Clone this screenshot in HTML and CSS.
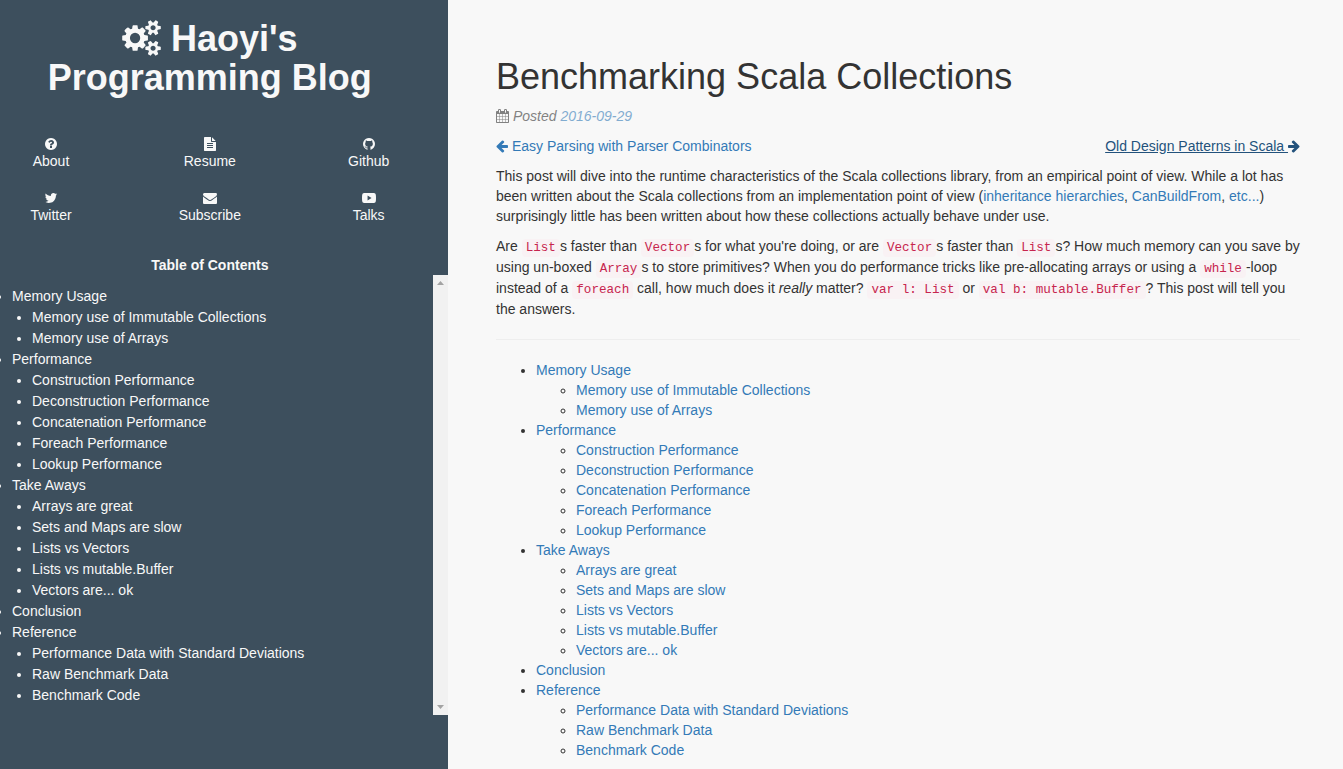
FILE: index.html
```html
<!DOCTYPE html>
<html lang="en">
<head>
<meta charset="utf-8">
<title>Benchmarking Scala Collections</title>
<link rel="stylesheet" href="styles.css">
</head>
<body>
<div class="page">
  <aside class="sidebar">
    <header class="brand">
      <h1 class="brand-title"><a href="#"><svg class="icon-cogs" viewBox="0 0 1920 1792" aria-hidden="true"><path d="M896 896q0-106-75-181t-181-75-181 75-75 181 75 181 181 75 181-75 75-181zm768 512q0-52-38-90t-90-38-90 38-38 90q0 53 37.500 90.500t90.500 37.500 90.500-37.500 37.500-90.500zm0-1024q0-52-38-90t-90-38-90 38-38 90q0 53 37.500 90.500t90.500 37.500 90.500-37.500 37.500-90.500zm-384 421v185q0 10-7 19.500t-16 10.500l-155 24q-11 35-32 76 34 48 90 115 7 11 7 20 0 12-7 19-23 30-82.500 89.500t-78.500 59.500q-11 0-21-7l-115-90q-37 19-77 31-11 108-23 155-7 24-30 24h-186q-11 0-20-7.500t-10-17.500l-23-153q-34-10-75-31l-118 89q-7 7-20 7-11 0-21-8-144-133-144-160 0-9 7-19 10-14 41-53t47-61q-23-44-35-82l-152-24q-10-1-17-9.500t-7-19.500v-185q0-10 7-19.500t16-10.500l155-24q11-35 32-76-34-48-90-115-7-11-7-20 0-12 7-20 22-30 82-89t79-59q11 0 21 7l115 90q34-18 77-32 11-108 23-154 7-24 30-24h186q11 0 20 7.500t10 17.500l23 153q34 10 75 31l118-89q8-7 20-7 11 0 21 8 144 133 144 160 0 8-7 19-12 16-42 54t-45 60q23 48 34 82l152 23q10 2 17 10.500t7 19.500zm640 533v140q0 16-149 31-12 27-30 52 51 113 51 138 0 4-4 7-122 71-124 71-8 0-46-47t-52-68q-20 2-30 2t-30-2q-14 21-52 68t-46 47q-2 0-124-71-4-3-4-7 0-25 51-138-18-25-30-52-149-15-149-31v-140q0-16 149-31 13-29 30-52-51-113-51-138 0-4 4-7 4-2 35-20t59-34 30-16q8 0 46 46.500t52 67.500q20-2 30-2t30 2q51-71 92-112l6-2q4 0 124 70 4 3 4 7 0 25-51 138 17 23 30 52 149 15 149 31zm0-1024v140q0 16-149 31-12 27-30 52 51 113 51 138 0 4-4 7-122 71-124 71-8 0-46-47t-52-68q-20 2-30 2t-30-2q-14 21-52 68t-46 47q-2 0-124-71-4-3-4-7 0-25 51-138-18-25-30-52-149-15-149-31v-140q0-16 149-31 13-29 30-52-51-113-51-138 0-4 4-7 4-2 35-20t59-34 30-16q8 0 46 46.500t52 67.500q20-2 30-2t30 2q51-71 92-112l6-2q4 0 124 70 4 3 4 7 0 25-51 138 17 23 30 52 149 15 149 31z"/></svg> Haoyi's Programming Blog</a></h1>
    </header>
    <nav class="site-nav" aria-label="Site">
      <a href="#"><svg viewBox="0 0 1792 1792" aria-hidden="true"><path d="M1024 1376v-192q0-14-9-23t-23-9h-192q-14 0-23 9t-9 23v192q0 14 9 23t23 9h192q14 0 23-9t9-23zm256-672q0-88-55.500-163t-138.500-116-170-41q-243 0-371 213-15 24 8 42l132 100q7 6 19 6 16 0 25-12 53-68 86-92 34-24 86-24 48 0 85.500 26t37.500 59q0 38-20 61t-68 45q-63 28-115.500 86.500t-52.500 125.500v36q0 14 9 23t23 9h192q14 0 23-9t9-23q0-19 21.500-49.500t54.500-49.500q32-18 49-28.500t46-35 44.500-48 28-60.500 12.500-81zm384 192q0 209-103 385.500t-279.500 279.500-385.500 103-385.500-103-279.500-279.500-103-385.500 103-385.500 279.500-279.500 385.500-103 385.500 103 279.500 279.500 103 385.500z"/></svg><span>About</span></a>
      <a href="#"><svg viewBox="0 0 1792 1792" aria-hidden="true"><path d="M1596 476q14 14 28 36h-472v-472q22 14 36 28zm-476 164h544v1056q0 40-28 68t-68 28h-1344q-40 0-68-28t-28-68v-1600q0-40 28-68t68-28h800v544q0 40 28 68t68 28zm160 736v-64q0-14-9-23t-23-9h-704q-14 0-23 9t-9 23v64q0 14 9 23t23 9h704q14 0 23-9t9-23zm0-256v-64q0-14-9-23t-23-9h-704q-14 0-23 9t-9 23v64q0 14 9 23t23 9h704q14 0 23-9t9-23zm0-256v-64q0-14-9-23t-23-9h-704q-14 0-23 9t-9 23v64q0 14 9 23t23 9h704q14 0 23-9t9-23z"/></svg><span>Resume</span></a>
      <a href="#"><svg viewBox="0 0 1792 1792" aria-hidden="true"><path d="M896 128q209 0 385.500 103t279.500 279.500 103 385.500q0 251-146.500 451.500t-378.500 277.500q-27 5-40-7t-13-30q0-3 .5-76.500t.5-134.500q0-97-52-142 57-6 102.500-18t94-39 81-66.500 53-105 20.500-150.500q0-119-79-206 37-91-8-204-28-9-81 11t-92 44l-38 24q-93-26-192-26t-192 26q-16-11-42.500-27t-83.500-38.500-85-13.500q-45 113-8 204-79 87-79 206 0 85 20.500 150t52.500 105 80.500 67 94 39 102.500 18q-39 36-49 103-21 10-45 15t-57 5-65.500-21.500-55.500-62.500q-19-32-48.500-52t-49.500-24l-20-3q-21 0-29 4.500t-5 11.500 9 14 13 12l7 5q22 10 43.500 38t31.500 51l10 23q13 38 44 61.500t67 30 69.500 7 55.500-3.500l23-4q0 38 .5 88.500t.5 54.500q0 18-13 30t-40 7q-232-77-378.500-277.500t-146.500-451.500q0-209 103-385.500t279.500-279.500 385.500-103z"/></svg><span>Github</span></a>
      <a href="#"><svg viewBox="0 0 1792 1792" aria-hidden="true"><path d="M1684 408q-67 98-162 167 1 14 1 42 0 130-38 259.500t-115.500 248.500-184.500 210.500-258 146-323 54.500q-271 0-496-145 35 4 78 4 225 0 401-138-105-2-188-64.500t-114-159.500q33 5 61 5 43 0 85-11-112-23-185.500-111.500t-73.500-205.500v-4q68 38 146 41-66-44-105-115t-39-154q0-88 44-163 121 149 294.500 238.500t371.500 99.500q-8-38-8-74 0-134 94.500-228.500t228.500-94.500q140 0 236 102 109-21 205-78-37 115-142 178 93-10 186-50z"/></svg><span>Twitter</span></a>
      <a href="#"><svg viewBox="0 0 1792 1792" aria-hidden="true"><path d="M1792 710v794q0 66-47 113t-113 47h-1472q-66 0-113-47t-47-113v-794q44 49 101 87 362 246 497 345 57 42 92.500 65.500t94.500 48 110 24.500h2q51 0 110-24.500t94.500-48 92.500-65.500q170-123 498-345 57-39 100-87zm0-294q0 79-49 151t-122 123q-376 261-468 325-10 7-42.500 31t-54 38.500-52 32.500-57.500 27-50 9h-2q-23 0-50-9t-57.500-27-52-32.500-54-38.500-42.500-31q-91-64-262-182.500t-205-142.500q-62-42-117-115.500t-55-136.500q0-78 41.500-130t118.500-52h1472q65 0 112.500 47t47.500 113z"/></svg><span>Subscribe</span></a>
      <a href="#"><svg viewBox="0 0 1792 1792" aria-hidden="true"><path fill-rule="evenodd" d="M260 262Q896 220 1532 262Q1740 272 1768 480Q1816 896 1768 1312Q1740 1520 1532 1530Q896 1572 260 1530Q52 1520 24 1312Q-24 896 24 480Q52 272 260 262zM711 576V1216L1223 896z"/></svg><span>Talks</span></a>
    </nav>
    <h2 class="toc-title">Table of Contents</h2>
    <div class="toc-box">
      <ul class="side-toc">
        <li><a href="#">Memory Usage</a>
          <ul>
            <li><a href="#">Memory use of Immutable Collections</a></li>
            <li><a href="#">Memory use of Arrays</a></li>
          </ul></li>
        <li><a href="#">Performance</a>
          <ul>
            <li><a href="#">Construction Performance</a></li>
            <li><a href="#">Deconstruction Performance</a></li>
            <li><a href="#">Concatenation Performance</a></li>
            <li><a href="#">Foreach Performance</a></li>
            <li><a href="#">Lookup Performance</a></li>
          </ul></li>
        <li><a href="#">Take Aways</a>
          <ul>
            <li><a href="#">Arrays are great</a></li>
            <li><a href="#">Sets and Maps are slow</a></li>
            <li><a href="#">Lists vs Vectors</a></li>
            <li><a href="#">Lists vs mutable.Buffer</a></li>
            <li><a href="#">Vectors are... ok</a></li>
          </ul></li>
        <li><a href="#">Conclusion</a></li>
        <li><a href="#">Reference</a>
          <ul>
            <li><a href="#">Performance Data with Standard Deviations</a></li>
            <li><a href="#">Raw Benchmark Data</a></li>
            <li><a href="#">Benchmark Code</a></li>
          </ul></li>
      </ul>
      <div class="track" aria-hidden="true">
        <svg viewBox="0 0 15 15"><path d="M4 10h7L7.500 6z"/></svg>
        <svg viewBox="0 0 15 15"><path d="M4 5h7L7.500 9z"/></svg>
      </div>
    </div>
  </aside>

  <main class="post">
    <h1 class="post-title">Benchmarking Scala Collections</h1>
    <p class="posted"><svg class="icon icon-calendar" viewBox="64 0 1664 1792" aria-hidden="true"><path d="M192 1664h288v-288h-288v288zm352 0h320v-288h-320v288zm-352-352h288v-320h-288v320zm352 0h320v-320h-320v320zm-352-384h288v-288h-288v288zm736 736h320v-288h-320v288zm-384-736h320v-288h-320v288zm768 736h288v-288h-288v288zm-384-352h320v-320h-320v320zm-352-864v-288q0-13-9.500-22.500t-22.500-9.500h-64q-13 0-22.500 9.500t-9.500 22.500v288q0 13 9.500 22.500t22.500 9.500h64q13 0 22.500-9.500t9.500-22.500zm736 864h288v-320h-288v320zm-384-384h320v-288h-320v288zm384 0h288v-288h-288v288zm32-480v-288q0-13-9.500-22.500t-22.500-9.500h-64q-13 0-22.500 9.500t-9.500 22.500v288q0 13 9.500 22.500t22.500 9.500h64q13 0 22.500-9.500t9.500-22.500zm384-64v1280q0 52-38 90t-90 38h-1408q-52 0-90-38t-38-90v-1280q0-52 38-90t90-38h128v-96q0-66 47-113t113-47h64q66 0 113 47t47 113v96h384v-96q0-66 47-113t113-47h64q66 0 113 47t47 113v96h128q52 0 90 38t38 90z"/></svg> <em>Posted <a href="#">2016-09-29</a></em></p>
    <nav class="pager" aria-label="Posts">
      <a href="#"><svg class="icon icon-arrow" viewBox="128 0 1536 1792" aria-hidden="true"><path d="M1664 896v128q0 53-32.500 90.500t-84.500 37.500h-704l293 294q38 36 38 90t-38 90l-75 76q-37 37-90 37-52 0-91-37l-651-652q-37-37-37-90 0-52 37-91l651-650q38-38 91-38 52 0 90 38l75 74q38 38 38 91t-38 91l-293 293h704q52 0 84.500 37.500t32.500 90.500z"/></svg> Easy Parsing with Parser Combinators</a>
      <a class="is-hovered" href="#">Old Design Patterns in Scala <svg class="icon icon-arrow" viewBox="128 0 1536 1792" aria-hidden="true"><path transform="translate(1792 0) scale(-1 1)" d="M1664 896v128q0 53-32.500 90.500t-84.500 37.500h-704l293 294q38 36 38 90t-38 90l-75 76q-37 37-90 37-52 0-91-37l-651-652q-37-37-37-90 0-52 37-91l651-650q38-38 91-38 52 0 90 38l75 74q38 38 38 91t-38 91l-293 293h704q52 0 84.500 37.500t32.500 90.500z"/></svg></a>
    </nav>
    <p>This post will dive into the runtime characteristics of the Scala collections library, from an empirical point of view. While a lot has been written about the Scala collections from an implementation point of view (<a href="#">inheritance hierarchies</a>, <a href="#">CanBuildFrom</a>, <a href="#">etc...</a>) surprisingly little has been written about how these collections actually behave under use.</p>
    <p>Are <code>List</code>s faster than <code>Vector</code>s for what you're doing, or are <code>Vector</code>s faster than <code>List</code>s? How much memory can you save by using un-boxed <code>Array</code>s to store primitives? When you do performance tricks like pre-allocating arrays or using a <code>while</code>-loop instead of a <code>foreach</code> call, how much does it <em>really</em> matter? <code>var l: List</code> or <code>val b: mutable.Buffer</code>? This post will tell you the answers.</p>
    <hr>
    <ul class="post-toc">
      <li><a href="#">Memory Usage</a>
        <ul>
          <li><a href="#">Memory use of Immutable Collections</a></li>
          <li><a href="#">Memory use of Arrays</a></li>
        </ul></li>
      <li><a href="#">Performance</a>
        <ul>
          <li><a href="#">Construction Performance</a></li>
          <li><a href="#">Deconstruction Performance</a></li>
          <li><a href="#">Concatenation Performance</a></li>
          <li><a href="#">Foreach Performance</a></li>
          <li><a href="#">Lookup Performance</a></li>
        </ul></li>
      <li><a href="#">Take Aways</a>
        <ul>
          <li><a href="#">Arrays are great</a></li>
          <li><a href="#">Sets and Maps are slow</a></li>
          <li><a href="#">Lists vs Vectors</a></li>
          <li><a href="#">Lists vs mutable.Buffer</a></li>
          <li><a href="#">Vectors are... ok</a></li>
        </ul></li>
      <li><a href="#">Conclusion</a></li>
      <li><a href="#">Reference</a>
        <ul>
          <li><a href="#">Performance Data with Standard Deviations</a></li>
          <li><a href="#">Raw Benchmark Data</a></li>
          <li><a href="#">Benchmark Code</a></li>
        </ul></li>
    </ul>
  </main>
</div>
</body>
</html>
```
FILE: styles.css
```css
* {
  box-sizing: border-box;
}

body {
  margin: 0;
  background: #f8f8f8;
  color: #333;
  font-family: "Liberation Sans", Arial, sans-serif;
  font-size: 14px;
  line-height: 20px;
}

a {
  color: #337ab7;
  text-decoration: none;
}

svg {
  fill: currentColor;
}

.page {
  display: grid;
  grid-template-columns: 1fr 2fr;
  height: 100vh;
}

.sidebar {
  background: #3d4f5d;
  color: #f8f8f8;
  overflow: hidden;
}

.sidebar a {
  color: inherit;
}

.brand {
  padding: 19px 56px 0 28px;
  text-align: center;
}

.brand-title {
  margin: 0;
  font-size: 36px;
  line-height: 39px;
}

.icon-cogs {
  width: 39px;
  height: 36px;
  vertical-align: -5px;
}

.site-nav {
  display: grid;
  grid-template-columns: 102px 1fr 102px;
  row-gap: 20px;
  margin: 40px 28px 30px 0;
}

.site-nav a {
  display: flex;
  flex-direction: column;
  align-items: center;
}

.site-nav svg {
  width: 14px;
  height: 14px;
}

.toc-title {
  margin: 0 28px 0 0;
  font-size: 14px;
  line-height: 20px;
  text-align: center;
}

.toc-box {
  display: flex;
}

.side-toc {
  flex: 1;
  margin: 0;
  padding: 11px 0 9px 12px;
  line-height: 21px;
}

.side-toc ul {
  margin: 0;
  padding-left: 20px;
  list-style: disc;
}

.track {
  display: flex;
  flex-direction: column;
  justify-content: space-between;
  width: 15px;
  background: #f1f1f1;
  color: #a3a3a3;
}

.track svg {
  width: 15px;
  height: 15px;
}

.post {
  padding: 57px 4.8% 0 5.4%;
  overflow: hidden;
}

.post-title {
  margin: 0 0 9px;
  font-size: 36px;
  font-weight: 500;
  line-height: 40px;
}

.post p {
  margin: 0 0 10px;
}

.posted {
  opacity: 0.6;
}

.icon {
  height: 14px;
  vertical-align: -2px;
}

.icon-calendar {
  width: 13px;
}

.icon-arrow {
  width: 12px;
}

.pager {
  display: flex;
  justify-content: space-between;
  margin-bottom: 10px;
}

.pager .is-hovered {
  color: #23527c;
  text-decoration: underline;
}

code {
  padding: 2px 4px;
  border-radius: 4px;
  background: #f9f2f4;
  color: #c7254e;
  font-family: "Liberation Mono", "Courier New", monospace;
  font-size: 90%;
  line-height: 18px;
}

hr {
  margin: 20px 0;
  border: 0;
  border-top: 1px solid #eee;
}

.post-toc {
  margin: 0 0 10px;
  padding-left: 40px;
}

.post-toc ul {
  margin: 0;
  padding-left: 40px;
  list-style: circle;
}
```
